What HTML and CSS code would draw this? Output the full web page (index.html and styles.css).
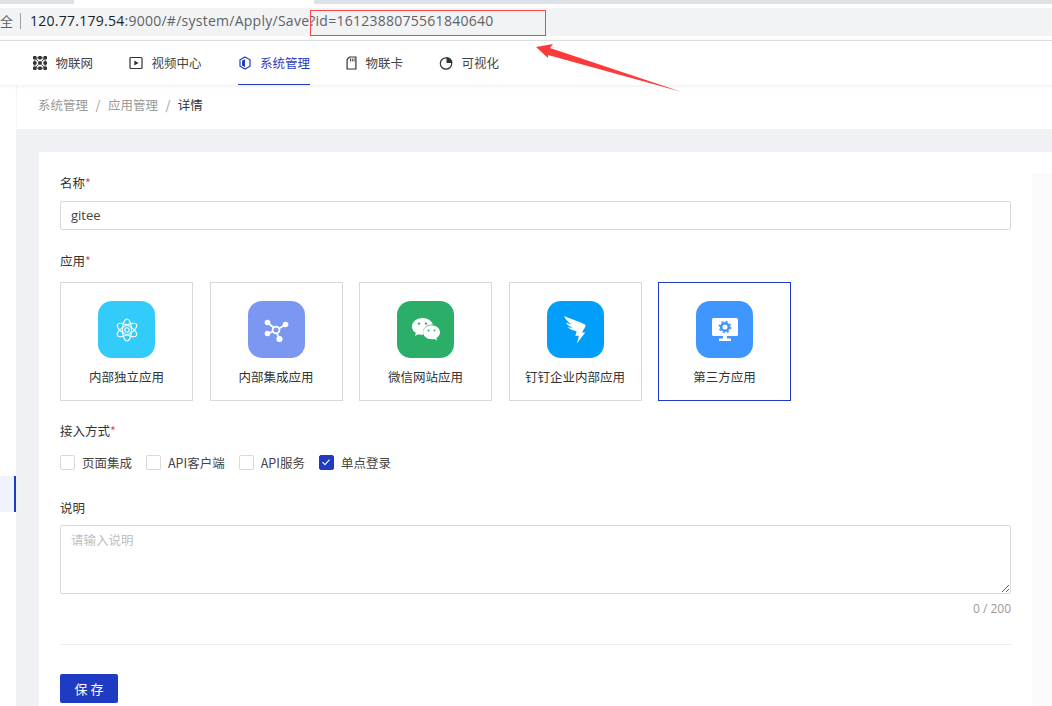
FILE: index.html
```html
<!DOCTYPE html>
<html lang="zh-CN">
<head>
	<meta charset="UTF-8">
	<title>详情</title>
	<link rel="stylesheet" href="styles.css">
</head>
<body>
	<div class="tabstrip">
		<div class="tab-gap"></div>
	</div>
	<div class="addressbar">
		<span class="secure">全</span>
		<span class="url"><b>120.77.179.54</b>:9000/#/system/Apply/Save?id=1612388075561840640</span>
	</div>

	<ul class="nav">
		<li>
			<svg class="nav-icon" viewBox="0 0 14 14"><g fill="#333"><rect x="0" y="0" width="3.600" height="3.600" rx="1"/><rect x="5.200" y="0" width="3.600" height="3.600" rx="1"/><rect x="10.400" y="0" width="3.600" height="3.600" rx="1"/><rect x="0" y="5.200" width="3.600" height="3.600" rx="1"/><rect x="5.200" y="5.200" width="3.600" height="3.600" rx="1"/><rect x="10.400" y="5.200" width="3.600" height="3.600" rx="1"/><rect x="0" y="10.400" width="3.600" height="3.600" rx="1"/><rect x="5.200" y="10.400" width="3.600" height="3.600" rx="1"/><rect x="10.400" y="10.400" width="3.600" height="3.600" rx="1"/></g><path d="M3 3l2.500 2.500M11 3L8.500 5.500M3 11l2.500-2.500M11 11L8.500 8.500M3.500 1.800h7M3.500 12.200h7M1.800 3.500v7M12.200 3.500v7" stroke="#333" stroke-width="0.900"/></svg>
			物联网
		</li>
		<li>
			<svg class="nav-icon" viewBox="0 0 14 14"><rect x="1" y="1.500" width="12" height="11" rx="1" fill="none" stroke="#333" stroke-width="1.200"/><path d="M5.300 4.400v5.200L9.600 7z" fill="#333"/></svg>
			视频中心
		</li>
		<li class="active">
			<svg class="nav-icon" viewBox="0 0 14 14"><path d="M7 1l5 2.800v6.400L7 13l-5-2.800V3.800z" fill="none" stroke="#1f3bc4" stroke-width="1.200"/><path d="M4 4.800l3-1.600v8l-3-1.700z" fill="#1f3bc4"/></svg>
			系统管理
		</li>
		<li>
			<svg class="nav-icon nav-icon-card" viewBox="0 0 11 14"><path d="M3.500 1h6.400v12H1.100V3.500z" fill="none" stroke="#333" stroke-width="1.200"/><path d="M4.500 2.500v3M6.300 2.500v3M8.100 2.500v3" stroke="#333" stroke-width="0.900"/></svg>
			物联卡
		</li>
		<li>
			<svg class="nav-icon" viewBox="0 0 14 14"><circle cx="7" cy="7.500" r="5.700" fill="none" stroke="#333" stroke-width="1.200"/><path d="M7.500 1v6h6A6 6 0 0 0 7.500 1z" fill="#333"/></svg>
			可视化
		</li>
	</ul>

	<div class="page">
		<div class="sidebar">
			<div class="side-active"></div>
		</div>
		<div class="main">
			<div class="breadcrumb">
				<span>系统管理</span><i>/</i><span>应用管理</span><i>/</i><span class="now">详情</span>
			</div>
			<div class="card">
				<div class="card-body">
					<div class="form">
						<div class="label">名称<em>*</em></div>
						<div class="input">gitee</div>

						<div class="label label-gap">应用<em>*</em></div>
						<div class="apps">
							<div class="app">
								<div class="app-icon c-cyan">
									<svg viewBox="0 0 24 24" width="24" height="24" fill="none" stroke="#fff" stroke-width="1.100"><ellipse cx="12" cy="12" rx="4.500" ry="11"/><ellipse cx="12" cy="12" rx="4.500" ry="11" transform="rotate(60 12 12)"/><ellipse cx="12" cy="12" rx="4.500" ry="11" transform="rotate(120 12 12)"/><circle cx="12" cy="12" r="2.200"/></svg>
								</div>
								内部独立应用
							</div>
							<div class="app">
								<div class="app-icon c-violet">
									<svg viewBox="0 0 28 28" width="28" height="28"><g stroke="#fff" stroke-width="1.800" fill="none"><circle cx="14" cy="14" r="3.400"/><path d="M11.500 11.500L6 7M17 12.500L23 9M11 15.500L6 17.500M15 17.500L17 22"/></g><g fill="#fff"><circle cx="5.500" cy="6.500" r="2.800"/><circle cx="23.500" cy="8.500" r="2.800"/><circle cx="5.500" cy="17.500" r="2.800"/><circle cx="17.500" cy="23" r="3.100"/></g></svg>
								</div>
								内部集成应用
							</div>
							<div class="app">
								<div class="app-icon c-green">
									<svg viewBox="0 0 30 26" width="30" height="26"><path d="M11.500 1C5.500 1 1 4.800 1 9.600c0 2.700 1.500 5 3.900 6.500l-.9 2.900 3.300-1.800c1.300.4 2.700.6 4.200.6h.8c-.3-.9-.4-1.700-.4-2.500 0-4.400 4.200-7.900 9.300-7.900h.7C20.800 3.900 16.600 1 11.500 1z" fill="#fff"/><path d="M29 15.300c0-3.900-3.800-7-8.400-7s-8.500 3.100-8.500 7 3.900 7 8.500 7c1 0 1.900-.1 2.800-.4l2.700 1.500-.7-2.400c2.200-1.300 3.600-3.400 3.600-5.700z" fill="#fff"/><g fill="#2bae67"><circle cx="8" cy="6.600" r="1.200"/><circle cx="15" cy="6.600" r="1.200"/><circle cx="17.500" cy="13.600" r="1"/><circle cx="23.500" cy="13.600" r="1"/></g></svg>
								</div>
								微信网站应用
							</div>
							<div class="app">
								<div class="app-icon c-blue">
									<svg viewBox="0 0 24 30" width="24" height="30"><path d="M1 1c6 2.500 14 5 21 8.500.8.500.6 1.300.2 2.200-.8 1.800-2.200 4-3.400 5.800h3.400l-8.300 11 2-7.700h-3.600l1.300-4.500C8.500 15.200 5.500 13.200 4.500 12l5.500 1.200C6.500 11.500 3.700 9.500 2.800 7.800l6.500 1.800C5.800 7.500 2.500 5 1 1z" fill="#fff"/></svg>
								</div>
								钉钉企业内部应用
							</div>
							<div class="app selected">
								<div class="app-icon c-sky">
									<svg viewBox="0 0 26 24" width="26" height="24"><path d="M1.500 0h23A1.500 1.500 0 0 1 26 1.500v15a1.500 1.500 0 0 1-1.500 1.500H15v2.500h4V23H7v-2.500h4V18H1.500A1.500 1.500 0 0 1 0 16.500v-15A1.500 1.500 0 0 1 1.500 0z" fill="#fff"/><circle cx="13" cy="9" r="3.800" fill="none" stroke="#4096ff" stroke-width="2.600"/><circle cx="13" cy="9" r="5.600" fill="none" stroke="#4096ff" stroke-width="1.500" stroke-dasharray="2 2.400"/></svg>
								</div>
								第三方应用
							</div>
						</div>

						<div class="label label-gap3">接入方式<em>*</em></div>
						<div class="checks">
							<label class="check"><span class="box"></span>页面集成</label>
							<label class="check"><span class="box"></span>API客户端</label>
							<label class="check"><span class="box"></span>API服务</label>
							<label class="check"><span class="box on"><svg viewBox="0 0 14 14" width="14" height="14"><path d="M3.500 7.200l2.500 2.400 4.500-5" fill="none" stroke="#fff" stroke-width="1.100"/></svg></span>单点登录</label>
						</div>

						<div class="label label-gap2">说明</div>
						<textarea class="textarea" placeholder="请输入说明"></textarea>
						<div class="count">0 / 200</div>
						<div class="divider"></div>
						<button class="save">保 存</button>
					</div>
					<div class="strip"></div>
				</div>
			</div>
		</div>
	</div>

	<!-- 截图上的标注 -->
	<div class="mark-box"></div>
	<svg class="mark-arrow" viewBox="0 0 1052 706" width="1052" height="706"><path d="M536 47L553 44 550 48 682 92 548 55 548 58z" fill="#fb3b3b"/></svg>
</body>
</html>
```
FILE: styles.css
```css
*{
	padding: 0;
	margin: 0;
	box-sizing: border-box;
}
html,body{
	height: 706px;
	overflow: hidden;
}
body{
	background-color: #fff;
	font-family: "Open Sans", "Noto Sans CJK SC", sans-serif;
	font-size: 13px;
	color: #333;
}
ul{
	list-style: none;
}

/* 浏览器顶部 */
.tabstrip{
	height: 8px;
	padding-left: 74px;
	background: linear-gradient(#dee1e6 4px, #fff 4px);
}
.tab-gap{
	width: 240px;
	height: 4px;
	background-color: #fff;
}
.addressbar{
	height: 28px;
	padding-bottom: 3px;
	background-color: #f1f3f4;
	display: flex;
	align-items: center;
	font-size: 14px;
	color: #5f6368;
}
.secure{
	width: 21px;
	height: 16px;
	line-height: 16px;
	border-right: 1px solid #9aa0a6;
	font-family: "Noto Sans CJK SC", sans-serif;
	font-size: 13px;
	margin-right: 9px;
}
.url{
	letter-spacing: 0.26px;
}
.url b{
	font-weight: 400;
	color: #202124;
}

/* 导航 */
.nav{
	height: 45px;
	margin-top: 4px;
	border-top: 1px solid #ddd;
	padding-left: 33px;
	display: flex;
	gap: 36px;
	box-shadow: 0 1px 4px rgba(0, 0, 0, 0.08);
	position: relative;
	background-color: #fff;
}
.nav li{
	height: 44px;
	display: flex;
	align-items: center;
	gap: 8.500px;
	font-family: "Noto Sans CJK SC", sans-serif;
	font-size: 12.500px;
	color: #444;
	border-bottom: 1px solid transparent;
}
.nav li.active{
	color: #1f3bc4;
	border-bottom-color: #1f3bc4;
}
.nav-icon{
	width: 14px;
	height: 14px;
}
.nav-icon-card{
	width: 11px;
}

/* 页面 */
.page{
	display: flex;
	height: 621px;
}
.sidebar{
	width: 16px;
	padding-top: 391px;
	background-color: #fff;
}
.side-active{
	height: 36px;
	background-color: #eef3fe;
	border-right: 2px solid #1f3bc4;
}
.main{
	flex: 1;
	background-color: #f0f1f5;
}
.breadcrumb{
	height: 44px;
	background-color: #fff;
	border-left: 1px solid #f5f5f7;
	padding: 0 0 5px 21px;
	display: flex;
	align-items: center;
	font-family: "Noto Sans CJK SC", sans-serif;
	font-size: 12.500px;
	color: #999;
}
.breadcrumb i{
	font-style: normal;
	margin: 0 7.500px;
}
.breadcrumb .now{
	color: #333;
}
.card{
	margin: 23px 0 0 23px;
	padding-top: 21px;
	background-color: #fff;
	height: 560px;
}
.card-body{
	display: flex;
	height: 100%;
}
.form{
	width: 993px;
	padding: 0 21px;
	font-family: "Noto Sans CJK SC", sans-serif;
}
.strip{
	flex: 1;
	background-color: #fafafa;
}
.label{
	height: 20px;
	line-height: 20px;
	font-size: 12.500px;
	color: #333;
}
.label em{
	font-style: normal;
	color: #f0405a;
}
.label-gap{
	margin-top: 21px;
}
.label-gap2{
	margin-top: 26px;
}
.label-gap3{
	margin-top: 20px;
}
.input{
	height: 29px;
	line-height: 27px;
	margin-top: 8px;
	padding-left: 10px;
	border: 1px solid #d9d9d9;
	border-radius: 2px;
	font-family: "Open Sans", sans-serif;
	font-size: 13px;
	color: #444;
}

/* 应用卡片 */
.apps{
	margin-top: 11px;
	display: flex;
	gap: 16.500px;
}
.app{
	width: 133px;
	height: 119px;
	border: 1px solid #d9d9d9;
	display: flex;
	flex-direction: column;
	align-items: center;
	padding-top: 18px;
	font-size: 12.500px;
	line-height: 18px;
	color: #333;
}
.app.selected{
	border-color: #1f3bc4;
}
.app-icon{
	width: 57px;
	height: 57px;
	border-radius: 14px;
	margin-bottom: 10px;
	display: flex;
	align-items: center;
	justify-content: center;
}
.c-cyan{ background-color: #32cbfa; }
.c-violet{ background-color: #7b97f2; }
.c-green{ background-color: #2bae67; }
.c-blue{ background-color: #019ff9; }
.c-sky{ background-color: #4096ff; }

/* 接入方式 */
.checks{
	margin-top: 11px;
	height: 20px;
	display: flex;
	gap: 14px;
}
.check{
	display: flex;
	align-items: center;
	gap: 7px;
	font-size: 12.500px;
	color: #444;
}
.box{
	width: 15px;
	height: 15px;
	border: 1px solid #d9d9d9;
	border-radius: 2px;
}
.box.on{
	background-color: #1f3bc4;
	border-color: #1f3bc4;
}
.box svg{
	display: block;
	margin: -0.500px;
}

/* 说明 */
.textarea{
	display: block;
	width: 100%;
	height: 69px;
	margin-top: 7px;
	padding: 4px 10px;
	border: 1px solid #d9d9d9;
	border-radius: 2px;
	font-family: "Noto Sans CJK SC", sans-serif;
	font-size: 12.500px;
	outline: none;
}
.textarea::placeholder{
	color: #bfbfbf;
}
.count{
	height: 20px;
	line-height: 20px;
	margin-top: 5px;
	text-align: right;
	font-family: "Open Sans", sans-serif;
	font-size: 12px;
	color: #999;
}
.divider{
	margin-top: 25px;
	height: 1px;
	background-color: #eee;
}
.save{
	display: block;
	margin-top: 29px;
	width: 58px;
	height: 29px;
	border: none;
	border-radius: 2px;
	background-color: #1f3bc4;
	color: #fff;
	font-family: "Noto Sans CJK SC", sans-serif;
	font-size: 13px;
}

/* 标注 */
.mark-box{
	position: absolute;
	left: 310px;
	top: 10px;
	width: 236px;
	height: 26px;
	border: 1px solid #f44;
}
.mark-arrow{
	position: absolute;
	left: 0;
	top: 0;
	pointer-events: none;
}
```
